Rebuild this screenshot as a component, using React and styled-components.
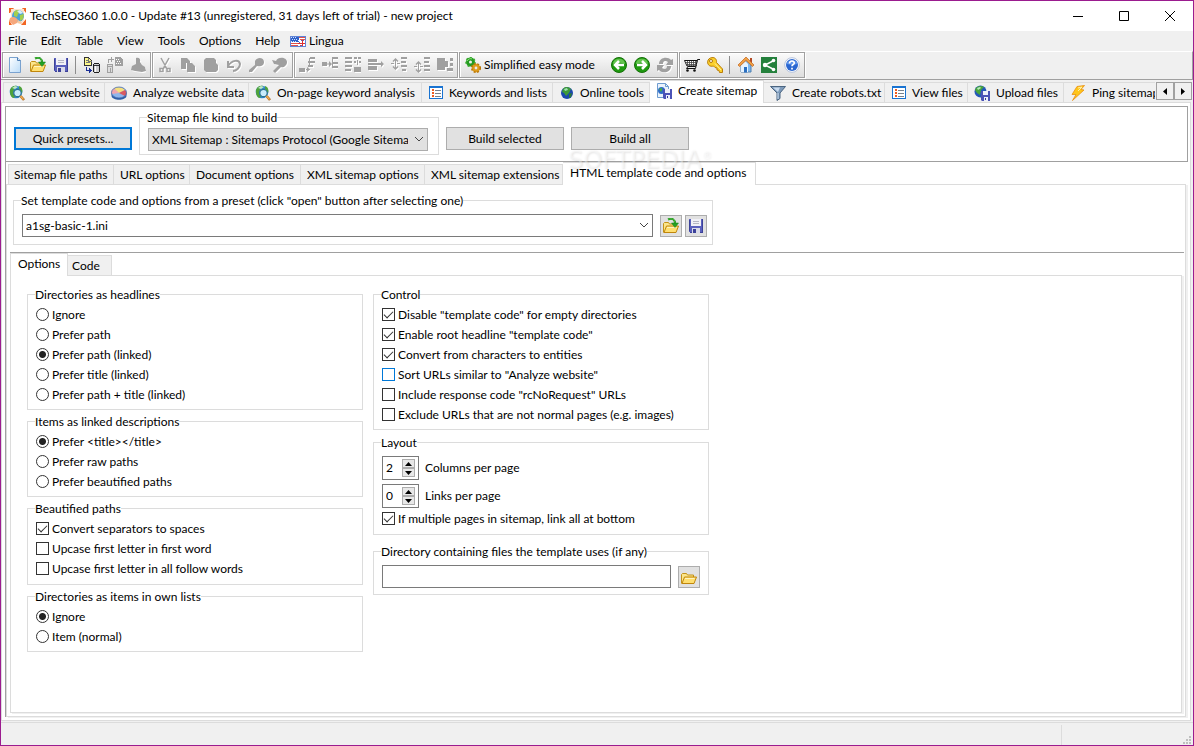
import React, { useState } from 'react'
import styled, { createGlobalStyle, css } from 'styled-components'

const line = '#dcdcdc'
const dark = '#a0a0a0'
const face = '#f0f0f0'

const GlobalStyle = createGlobalStyle`
  *, *::before, *::after {
    box-sizing: border-box;
  }

  body {
    margin: 0;
    background: ${face};
    color: #000;
    font-family: Lato, 'Open Sans', sans-serif;
    font-size: 12px;
    line-height: 16px;
  }

  button, input, select {
    font: inherit;
    color: inherit;
  }
`

const Window = styled.div`
  display: flex;
  flex-direction: column;
  min-height: 100vh;
  border: 1px solid #9b1c8f;
  background: ${face};
`

const TitleBar = styled.header`
  display: flex;
  align-items: center;
  height: 30px;
  padding-left: 8px;
  background: #fff;
`

const Title = styled.h1`
  flex: 1;
  margin: 0 0 0 4px;
  font-size: 12px;
  font-weight: 400;
  white-space: nowrap;
`

const WindowButton = styled.button`
  display: flex;
  align-items: center;
  justify-content: center;
  width: 46px;
  height: 30px;
  padding: 0;
  border: 0;
  background: none;
`

const MenuBar = styled.nav`
  display: flex;
  align-items: center;
  gap: 14px;
  height: 20px;
  padding-left: 7px;
`

const MenuItem = styled.button`
  display: flex;
  align-items: center;
  gap: 3px;
  padding: 0;
  border: 0;
  background: none;
  white-space: nowrap;

  &:last-child {
    margin-left: -4px;
  }
`

const Toolbar = styled.div`
  display: flex;
  gap: 1px;
  height: 29px;
  padding-left: 1px;
  border-top: 1px solid #fff;
  border-right: 1px solid ${dark};
  border-bottom: 1px solid ${dark};
`

const ToolGroup = styled.div`
  display: flex;
  align-items: center;
  height: 26px;
  padding-right: 1px;
  border: 1px solid ${dark};
  box-shadow: inset 1px 1px 0 #fff, 1px 1px 0 #fff;
  background: linear-gradient(#fbfbfb, #dedede);
`

const ToolButton = styled.button`
  display: flex;
  align-items: center;
  justify-content: center;
  gap: 3px;
  width: 23px;
  height: 24px;
  padding: 0;
  border: 0;
  background: none;
  white-space: nowrap;

  ${({ $wide }) => $wide && css`
    justify-content: flex-start;
    width: 147px;
    padding-left: 5px;
  `}
`

const ToolSeparator = styled.div`
  width: 1px;
  height: 18px;
  margin: 0 4px 0 3px;
  background: #8c8c8c;
`

const TabRow = styled.div`
  display: flex;
  height: 22px;
  min-width: 0;
  padding-left: ${({ $indent }) => $indent || 0}px;
`

const TabClip = styled.div`
  display: flex;
  flex: 1;
  min-width: 0;
  margin-right: 1px;
  margin-bottom: -1px;
  overflow: hidden;
`

const Tab = styled.button`
  display: flex;
  flex: 0 0 ${({ $width }) => $width}px;
  align-items: center;
  gap: 6px;
  height: 20px;
  margin-top: 2px;
  padding: 0 0 0 ${({ $pad }) => $pad || 6}px;
  border: 1px solid ${line};
  border-width: 1px 1px 0 0;
  background: ${face};
  white-space: nowrap;

  &:first-child {
    border-left-width: 1px;
  }

  ${({ $active }) => $active && css`
    position: relative;
    height: 23px;
    margin-top: 0;
    padding-bottom: 3px;
    background: #fff;
  `}
`

const ScrollButton = styled.button`
  display: flex;
  align-items: center;
  justify-content: center;
  width: 18px;
  height: 18px;
  margin-top: 2px;
  padding: 0;
  border: 1px solid ${dark};
  background: ${face};

  & + & {
    margin-right: 1px;
  }
`

const MainPane = styled.main`
  display: flex;
  flex: 1;
  flex-direction: column;
  margin: 0 2px 1px 0;
  padding: 3px 2px 3px 3px;
  border: 1px solid ${line};
  background: #fff;
`

const SitemapPanel = styled.section`
  display: flex;
  flex: 1;
  flex-direction: column;
  border-top: 1px solid ${dark};
  border-left: 1px solid ${dark};
`

const BuildBar = styled.div`
  display: flex;
  align-items: flex-start;
  gap: 7px;
  height: 55px;
  padding: 3px 8px 0;
  border-right: 1px solid ${dark};
  border-bottom: 1px solid ${dark};
`

const PushButton = styled.button`
  width: 118px;
  height: 23px;
  margin-top: 17px;
  padding: 0;
  border: ${({ $focused }) => ($focused ? '2px solid #0078d7' : '1px solid #adadad')};
  background: #e1e1e1;
  white-space: nowrap;
`

const SectionTabs = styled.div`
  position: relative;
`

const Watermark = styled.span`
  position: absolute;
  top: -16px;
  left: 562px;
  z-index: 1;
  color: rgba(255, 255, 255, 0.4);
  font-family: 'DejaVu Sans', sans-serif;
  font-size: 24px;
  line-height: 28px;
  text-shadow: 1px 1px 2px rgba(0, 0, 0, 0.1);
  pointer-events: none;

  sup {
    font-size: 10px;
    line-height: 0;
  }
`

const SectionPane = styled.div`
  display: flex;
  flex: 1;
  flex-direction: column;
  margin-right: 2px;
  padding: 8px 1px 3px 3px;
  border: 1px solid ${line};
  box-shadow: 2px 1px 0 ${face};
`

const Group = styled.fieldset`
  width: ${({ $width }) => $width}px;
  min-width: 0;
  margin: 0;
  padding: 3px 8px ${({ $bottom }) => $bottom || 4}px;
  border: 1px solid ${line};
`

const Legend = styled.legend`
  height: 15px;
  margin-left: -1px;
  padding: 0;
  white-space: nowrap;
`

const BuildGroup = styled(Group)`
  padding-right: 6px;
`

const PresetGroup = styled(Group)`
  margin-left: 3px;
  padding-top: 6px;
  padding-right: 5px;
`

const DirectoryGroup = styled(Group)`
  margin-top: 4px;
  padding-top: 6px;
`

const FieldRow = styled.div`
  display: flex;
  align-items: center;
  gap: 3px;
`

const SelectWrap = styled.div`
  position: relative;
  flex: 1;
  margin-right: 4px;

  svg {
    position: absolute;
    top: 8px;
    right: 4px;
    pointer-events: none;
  }
`

const Select = styled.select`
  display: block;
  width: 100%;
  height: 23px;
  padding: 0 19px 0 3px;
  border: 1px solid ${({ $editable }) => ($editable ? '#7a7a7a' : '#adadad')};
  border-radius: 0;
  outline: 0;
  appearance: none;
  background: ${({ $editable }) => ($editable ? '#fff' : '#e1e1e1')};
`

const IconButton = styled.button`
  display: flex;
  align-items: center;
  justify-content: center;
  width: 22px;
  height: 22px;
  padding: 0;
  border: 1px solid #adadad;
  background: #e1e1e1;
`

const OptionsPanel = styled.div`
  display: flex;
  flex: 1;
  flex-direction: column;
  margin-top: 7px;
  border-top: 1px solid ${dark};
`

const OptionsPane = styled.div`
  display: flex;
  flex: 1;
  align-items: flex-start;
  gap: 10px;
  margin-right: 2px;
  padding: 11px 16px;
  border: 1px solid ${line};
  box-shadow: 2px 1px 0 ${face};
`

const Column = styled.div`
  display: flex;
  flex-direction: column;
  gap: ${({ $gap }) => $gap}px;
`

const Choice = styled.label`
  display: flex;
  align-items: center;
  gap: 3px;
  height: 20px;
  white-space: nowrap;
`

const Radio = styled.input`
  width: 13px;
  height: 13px;
  margin: 0 0 1px;
  border: 1px solid #333;
  border-radius: 50%;
  appearance: none;
  background: #fff;

  &:checked {
    background: radial-gradient(circle, #222 3px, #fff 4px);
  }
`

const Check = styled.input`
  width: 13px;
  height: 13px;
  margin: 0 0 1px;
  border: 1px solid ${({ $hot }) => ($hot ? '#0078d7' : '#333')};
  border-radius: 0;
  appearance: none;
  background: #fff;

  &:checked::before {
    content: '';
    display: block;
    width: 9px;
    height: 5px;
    margin: 2px 0 0 1px;
    border: solid #333;
    border-width: 0 0 1px 1px;
    transform: rotate(-45deg);
  }
`

const SpinRow = styled.div`
  display: flex;
  align-items: center;
  gap: 6px;
  height: 24px;
  margin: 3px 0 4px;

  & + & {
    margin: 0 0 1px;
  }
`

const SpinBox = styled.div`
  display: flex;
  align-items: center;
  width: 37px;
  height: 24px;
  padding-right: 3px;
  border: 1px solid #7a7a7a;
  background: #fff;
`

const SpinInput = styled.input`
  flex: 1;
  min-width: 0;
  height: 20px;
  padding: 0 0 2px 3px;
  border: 0;
  outline: 0;
  background: none;
`

const SpinButtons = styled.div`
  display: flex;
  flex-direction: column;
`

const SpinButton = styled.button`
  display: flex;
  align-items: center;
  justify-content: center;
  width: 13px;
  height: 9px;
  padding: 0;
  border: 1px solid #adadad;
  background: #e8e8e8;
`

const PathInput = styled.input`
  flex: 1;
  min-width: 0;
  height: 23px;
  margin-right: 4px;
  padding: 0 3px;
  border: 1px solid #7a7a7a;
  outline: 0;
`

const StatusBar = styled.footer`
  display: flex;
  align-items: flex-end;
  justify-content: flex-end;
  height: 23px;
  border-top: 1px solid ${line};
`

const StatusCell = styled.div`
  display: flex;
  align-items: flex-end;
  justify-content: flex-end;
  width: 132px;
  height: 20px;
  padding: 0 2px 1px;
  border-left: 1px solid ${line};
`

/* icons */

const Svg = ({ w = 16, h = 16, children, ...rest }) => (
  <svg width={w} height={h} viewBox={`0 0 ${w} ${h}`} fill="none" aria-hidden="true" {...rest}>
    {children}
  </svg>
)

const AppIcon = () => (
  <Svg w={17} h={17}>
    <path d="M0 0h5L1 5H0zM17 0v5l-4-5zM0 17v-5l3 5zM17 17h-5l5-6z" fill="#f26522" />
    <path d="M2 1h13v13H2z" fill="#fbe3d0" />
    <circle cx="9" cy="8" r="6" fill="#4aa3d8" />
    <path d="M5 4c3-3 5-2 6 0l-2 2-1 3-3-1zM11 7l4-1-1 5-3 2z" fill="#a5cf4c" />
    <path d="M8 3l3-1 3 3-3 1z" fill="#d7eefa" />
    <path d="M1 10c3-2 6-1 8 2l-1 3-4 2-4-4z" fill="#f5a77d" />
    <path d="M9 12l5 3-2 1-4-1z" fill="#f7c9a3" />
  </Svg>
)

const FlagIcon = () => (
  <Svg h={11} shapeRendering="crispEdges">
    <path d="M0 0h16v11H0z" fill="#fff" />
    <path d="M0 0h9v6H0z" fill="#2f62c9" />
    <path d="M9 1.500h7M9 3.500h7M0 7.500h9M0 9.500h8" stroke="#e0524b" />
    <path d="M1 1.500h1M3 1.500h1M5 1.500h1M2 3.500h1M4 3.500h1M6 3.500h1M1 5.500h1M3 5.500h1M5 5.500h1" stroke="#cfe0ff" />
    <path d="M10 4h6v7H8z" fill="#4c6cc5" />
    <path d="M8 11l8-7M9 4l7 7" stroke="#fff" strokeWidth="2" />
    <path d="M12.500 4v7M8 7.500h8M9 11l2-2" stroke="#df2f2f" />
    <path d="M.5.5h15v10H.5z" stroke="#5f83d6" />
  </Svg>
)

const NewIcon = () => (
  <Svg>
    <path d="M2.500.5h8l3 3v12h-11z" fill="url(#page)" stroke="#7aa2cf" />
    <path d="M10.500.5v3h3" fill="#d9eafb" stroke="#4f7fb5" />
    <defs>
      <linearGradient id="page" x1="0" y1="0" x2="1" y2="1">
        <stop stopColor="#fff" />
        <stop offset="1" stopColor="#b9dbf8" />
      </linearGradient>
    </defs>
  </Svg>
)

const OpenIcon = ({ arrow = true }) => (
  <Svg>
    <path d="M.5 14.500v-9l1-1h4l1 1.500h6v3" fill="#fbe58b" stroke="#c49217" />
    <path d="M1 14.500l2.500-6.500h12l-2.500 6.500z" fill="#ffdf70" stroke="#c0860c" />
    <path d="M4 9.500h9.500" stroke="#fff4bf" />
    {arrow && (
      <>
        <path d="M5 1.500c4-2 7 0 7 4" stroke="#178a1a" strokeWidth="2" />
        <path d="M5 1.500c4-2 7 0 7 4" stroke="#5fce48" strokeWidth=".8" />
        <path d="M8.500 5h7L12 9.500z" fill="#24a325" stroke="#137a17" strokeWidth=".5" />
      </>
    )}
  </Svg>
)

const SaveIcon = () => (
  <Svg shapeRendering="crispEdges">
    <path d="M1 1h14v14H2l-1-1z" fill="#5a60bd" />
    <path d="M1 2h1v11H1zM14 1h1v14h-1zM2 14h13v1H2z" fill="#3c4199" />
    <path d="M3 1h10v7H3z" fill="#f1f1f6" />
    <path d="M5 3.500h6M5 5.500h6" stroke="#b5b6c4" />
    <path d="M4 10h8v5H4z" fill="#d9dae8" />
    <path d="M5 11h3v4H5z" fill="#3c4199" />
  </Svg>
)

const DataIcon = ({ muted }) => (
  <Svg w={17} shapeRendering="crispEdges">
    {muted ? (
      <>
        <path d="M9 0h5l3 3v6H9z" fill="#a0a0a0" />
        <path d="M10 2h1v1h-1zM12 2h1v1h-1zM11 4h1v1h-1zM13 4h1v1h-1zM10 6h1v1h-1zM12 6h1v1h-1zM14 6h1v1h-1z" fill="#fff" />
        <path d="M1.500 7.500h5v8h-5z" fill="#ddd" stroke="#a0a0a0" />
        <path d="M2 9.500h4M4.500 11v4M2 2.500h6M5.500 0v5M2.500 3v3" stroke="#a0a0a0" />
      </>
    ) : (
      <>
        <path d="M1.500.5h4l3 3v5h-7z" fill="#fdf98a" stroke="#333" />
        <path d="M3 3.500h2M3 5.500h4M5.500 1v3h3" stroke="#777" />
        <path d="M11.500 6.500h4l1 1v7l-1 1h-4l-1-1v-7z" fill="#d0d0d0" stroke="#222" />
        <path d="M12.500 8v7" stroke="#fff" />
        <path d="M11 8.500h5" stroke="#333" />
        <path d="M3.500 10v3h5M6.500 11v5M7.500 12v3" stroke="#1b2f95" />
      </>
    )}
  </Svg>
)

// disabled toolbar glyphs are a grey shape over a white one moved by 1px
const mutedPaths = {
  brush: { d: 'M6 1c3-1 5 1 4 4l2 3 3 2 1 4-4 1-7-1-4-1 1-4 4-2z' },
  cut: { d: 'M4 1l5 9M12 1L7 10M3 11.500h3v3H3zM10 11.500h3v3h-3zM6 12l2-3 2 3', stroke: 1.5 },
  copy: { d: 'M1 1h6l3 3v2H6v6H1zM7 6h5l3 3v6H7z' },
  paste: { d: 'M1 3l2-2h8l2 2v3l2 2v5l-2 2H3l-2-2z' },
  undo: { d: 'M2 4v6h6M2 9c4-6 11-7 12-2 0 4-4 7-7 7', stroke: 2 },
  find: { d: 'M6 4c3-5 9-3 9 1s-4 5-7 4l-5 6H0v-2l6-5z' },
  replace: { d: 'M0 3l4 1C6-1 15 0 15 5c0 4-4 6-6 5l-6 6-2-2 6-6-5-1z' },
  row1: { d: 'M0 11h6v4H0zM11 0h5v2h-5zM9 4h7v2H9zM9 8h5v2H9zM10 1h1v9h-1zM7 12h4v1H7zM8 10l3 2.500-3 2.500z' },
  row2: { d: 'M0 5h5v4H0zM5 6.500h3v1H5zM7 4l3 3-3 3zM11 0h5v2h-5zM11 5h5v2h-5zM11 9h5v2h-5zM10 0h1v11h-1z' },
  row3: { d: 'M0 0h7v2H0zM0 4h7v2H0zM0 8h7v2H0zM9 0h3v2H9zM13 0h3v2h-3zM9 4h2v2H9zM12 3h1v5h-1zM14 4h2v2h-2zM9 10h7v5H9zM0 12h6v2H0z' },
  row4: { d: 'M0 2h9v3H0zM0 6h13V4l3 3-3 3V8H0zM0 9h9v4H0z' },
  row5: { d: 'M4.500 1l3 3-1 1-1.500-1.500v7L6.500 9l1 1-3 3-3-3 1-1L4 10.500v-7L2.500 5l-1-1zM0 6h3v1H0zM6 6h3v1H6zM10 0h6v2h-6zM10 4h5v2h-5zM10 8h6v2h-6zM11 12h4v2h-4z' },
  row6: { d: 'M4.500 4l3 3-1 1-1.500-1.500v7L6.500 12l1 1-3 3-3-3 1-1L4 13.500v-7L2.500 8l-1-1zM0 9h3v1H0zM6 9h3v1H6zM10 0h6v2h-6zM10 4h5v2h-5zM10 8h6v2h-6zM10 12h6v2h-6z' },
  row7: { d: 'M0 1h8v3h3v6H8v3H0zM10 11h6v3h-6zM13 1h3v3h-3zM13 6h3v3h-3z' },
  refresh: { d: 'M2 7c0-7 9-8 12-4l2-1v6h-7l2-3c-3-2-5-1-5 2zM14 9c0 7-9 8-12 4l-2 1V8h7l-2 3c3 2 5 1 5-2z' },
}

const MutedIcon = ({ name }) => {
  const { d, stroke } = mutedPaths[name]
  return (
    <Svg>
      <path d={d} transform="translate(1 1)" fill={stroke ? 'none' : '#fff'} stroke={stroke ? '#fff' : 'none'} strokeWidth={stroke} />
      <path d={d} fill={stroke ? 'none' : '#a0a0a0'} stroke={stroke ? '#a0a0a0' : 'none'} strokeWidth={stroke} />
    </Svg>
  )
}

const GearsIcon = () => (
  <Svg>
    <circle cx="5.500" cy="5" r="3" stroke="#259b22" strokeWidth="3" />
    <circle cx="5.500" cy="5" r="4.500" stroke="#3aab30" strokeWidth="1.500" strokeDasharray="2 2" />
    <path d="M2 4c1-2 4-3 5-2" stroke="#8ce07a" />
    <circle cx="11" cy="11" r="2.800" stroke="#dc9a1c" strokeWidth="2.800" />
    <circle cx="11" cy="11" r="4.300" stroke="#b97706" strokeWidth="1.500" strokeDasharray="2 1.500" />
  </Svg>
)

const ArrowIcon = ({ back }) => (
  <Svg>
    <circle cx="8" cy="8" r="7.500" fill="#1f9a10" stroke="#157009" />
    <path d="M2 7c0-7 12-7 12 0-4-2-8-2-12 0z" fill="#64c44f" />
    <path d={back ? 'M13 8H4M8 4L4 8l4 4' : 'M3 8h9M8 4l4 4-4 4'} stroke="#fff" strokeWidth="2.500" />
  </Svg>
)

const CartIcon = () => (
  <Svg>
    <path d="M16 2.500h-2.500l-2 9H2.500L4 9.500h7.500" stroke="#111" />
    <path d="M.5 3.500h12.500l-1 5.500H3z" fill="#fff" stroke="#111" />
    <path d="M1 5.500h12M2 7.500h11M3.500 4v5M5.500 4v5M7.500 4v5M9.500 4v5M11.500 4v5" stroke="#444" strokeWidth=".8" />
    <circle cx="3.500" cy="13.500" r="1.300" fill="#111" />
    <circle cx="10.500" cy="13.500" r="1.300" fill="#111" />
  </Svg>
)

const KeyIcon = () => (
  <Svg>
    <path d="M5 .6c3-.5 5 2 4.500 4.900L15.500 12v3.500h-3l-.5-2-2-.5v-2l-2-.5L6.500 9C3 10 .5 8 .6 4.800.8 2.500 2.500.8 5 .6z" fill="#fbd02c" stroke="#bb7f0a" />
    <circle cx="4" cy="4" r="1.500" fill="#fff" stroke="#b27708" />
    <path d="M8 6.500l6 6.500" stroke="#fff1a3" />
  </Svg>
)

const HomeIcon = () => (
  <Svg>
    <path d="M3 8l5-5 5 5v7H3z" fill="#7db8ee" stroke="#4f7fae" />
    <path d="M3 8l4-4 3 3v8H3z" fill="#e6f3ff" />
    <path d="M12 1h2v5h-2z" fill="#b34a25" />
    <path d="M8 0l8 8-1.500 1.500L8 3.500 1.500 9.500 0 8z" fill="#f0a046" stroke="#c1641b" strokeWidth=".7" />
    <path d="M6 10h3v5.500H6z" fill="#2b6fc0" />
  </Svg>
)

const ShareIcon = () => (
  <Svg>
    <path d="M0 0h16v16H0z" fill="#24803c" />
    <path d="M13 3.500L4 8l9 4.500" stroke="#fff" strokeWidth="1.500" />
    <circle cx="12.500" cy="3.500" r="1.800" fill="#fff" />
    <circle cx="4" cy="8" r="2.200" fill="#fff" />
    <circle cx="12.500" cy="12.500" r="1.800" fill="#fff" />
  </Svg>
)

const HelpIcon = () => (
  <Svg>
    <circle cx="8" cy="8" r="7.300" fill="#fff" stroke="#b4c2dd" />
    <circle cx="8" cy="8" r="6" fill="#2b67d0" />
    <path d="M2.500 7c1-5 10-5 11 0-4 1-7 1-11 0z" fill="#5d94ec" />
    <path d="M5.500 6.500c0-3.500 5-3 4.800-.3-.3 1.500-2.300 1.300-2.300 3M8 10.800v1.700" stroke="#fff" strokeWidth="1.700" />
  </Svg>
)

const ScanIcon = () => (
  <Svg>
    <circle cx="7" cy="7" r="6.300" fill="#2f86cc" />
    <path d="M1 5c1-4 5-5 7-4L5 4 4 8l2 4-2 1C1 11 1 8 1 5zM10 1c3 1 4 4 3 7l-3-3z" fill="#4fa33a" />
    <path d="M3 3l3-2 3 1-3 2z" fill="#bfe7c8" />
    <circle cx="8.500" cy="8" r="3.700" fill="#c9ecfb" stroke="#2b7292" strokeWidth="1.200" />
    <path d="M11.500 11l3.500 4" stroke="#a8641f" strokeWidth="2.600" />
    <path d="M11.500 11l3 3.500" stroke="#f6b04e" strokeWidth="1.200" />
  </Svg>
)

const PieIcon = () => (
  <Svg>
    <path d="M.5 8v3c1 5 14 5 15 0V8z" fill="#2f5fa8" />
    <ellipse cx="8" cy="7.500" rx="7.500" ry="5.500" fill="#8fb6ec" />
    <path d="M8 8L3 3.500c3-2 8-2 11 1.500z" fill="#f6df7b" />
    <path d="M8 8l6-3c2 2 2 4 0 6z" fill="#d95a62" />
    <path d="M8 8L3 3.500C0 5.500 0 8 1 9z" fill="#f0a5ad" />
    <ellipse cx="8" cy="7.500" rx="7.500" ry="5.500" stroke="#3a5fa5" strokeWidth=".7" />
  </Svg>
)

const ListIcon = () => (
  <Svg w={14} h={13} shapeRendering="crispEdges">
    <path d="M.5.5h13v12H.5z" fill="#fff" stroke="#1973d1" />
    <path d="M0 1h14" stroke="#1973d1" strokeWidth="2" />
    <path d="M3 4h2M3 7h2M3 10h2" stroke="#ee5b20" strokeWidth="2" />
    <path d="M6 4.500h6M6 7.500h6M6 10.500h6" stroke="#77818c" />
  </Svg>
)

const GlobeIcon = () => (
  <Svg w={14}>
    <circle cx="7" cy="8" r="6" fill="#1c48ae" />
    <path d="M3 4c2-3 6-2 8 0l-2 4-3 3-2-3-2-1z" fill="#3f9a38" />
    <path d="M4 4l3-1 1 2-3 1z" fill="#9de0b3" />
    <path d="M9 9l3-1-1 4-2 1z" fill="#2d7c35" />
  </Svg>
)

const SmallDisk = () => (
  <>
    <path d="M7 6h9v10H8l-1-1z" fill="#4b53b6" />
    <path d="M9 6h5v4H9zM10 12h4v4h-4z" fill="#edf0fa" />
    <path d="M11 13h1v2h-1z" fill="#343a99" />
  </>
)

const SitemapIcon = () => (
  <Svg>
    <path d="M1.500.5h8l3 3v11h-11z" fill="#eaf3fc" stroke="#6f9dd0" />
    <path d="M9.500.5v3h3" stroke="#6f9dd0" />
    <circle cx="5.500" cy="7.500" r="3.500" fill="#2d6cc7" />
    <path d="M3 6l3-1v2l-1 2z" fill="#4caf3c" />
    <SmallDisk />
  </Svg>
)

const FunnelIcon = () => (
  <Svg>
    <path d="M.5 1.500h15L10 8v5.500l-3 2V8z" fill="#7d9aba" stroke="#4b6580" />
    <path d="M3 2.500h7L8 7z" fill="#c9dcf0" />
    <path d="M8 8v6" stroke="#d3e2f2" />
  </Svg>
)

const UploadIcon = () => (
  <Svg>
    <circle cx="6.500" cy="6.500" r="6" fill="#2459b8" />
    <path d="M1 5c1-4 6-5 9-3L7 5l-1 5-3-2z" fill="#4aa53a" />
    <path d="M3 3l3-1 1 1-3 2z" fill="#b8ecc0" />
    <SmallDisk />
  </Svg>
)

const BoltIcon = () => (
  <Svg>
    <path d="M7 1.500L14.500.5 11 4.500l3 .5L2.500 15.500 6 9.500 2 9.500z" fill="#ffc61a" stroke="#e88e12" strokeWidth=".8" />
    <path d="M8 3l4-1-4 4" stroke="#fff2a6" />
  </Svg>
)

const Chevron = () => (
  <Svg w={10} h={7}>
    <path d="M1 1l4 4 4-4" stroke="#444" />
  </Svg>
)

/* parts */

const toolGroups = [
  [
    ['New', <NewIcon />], ['Open', <OpenIcon />], ['Save', <SaveIcon />], null,
    ['Import', <DataIcon />], ['Export', <DataIcon muted />], ['Clear', <MutedIcon name="brush" />],
  ],
  ['cut', 'copy', 'paste', 'undo', 'find', 'replace'].map((name) => [name, <MutedIcon name={name} />]),
  ['row1', 'row2', 'row3', 'row4', 'row5', 'row6', 'row7'].map((name) => [name, <MutedIcon name={name} />]),
  [
    ['Simplified easy mode', <GearsIcon />, true], ['Back', <ArrowIcon back />],
    ['Forward', <ArrowIcon />], ['Refresh', <MutedIcon name="refresh" />],
  ],
  [
    ['Buy', <CartIcon />], ['Register', <KeyIcon />], null,
    ['Home', <HomeIcon />], ['Share', <ShareIcon />], ['Help', <HelpIcon />],
  ],
]

const mainTabs = [
  { label: 'Scan website', icon: <ScanIcon />, width: 102, pad: 5 },
  { label: 'Analyze website data', icon: <PieIcon />, width: 144 },
  { label: 'On-page keyword analysis', icon: <ScanIcon />, width: 173 },
  { label: 'Keywords and lists', icon: <ListIcon />, width: 131, pad: 7 },
  { label: 'Online tools', icon: <GlobeIcon />, width: 97, pad: 7 },
  { label: 'Create sitemap', icon: <SitemapIcon />, width: 114, active: true },
  { label: 'Create robots.txt', icon: <FunnelIcon />, width: 121 },
  { label: 'View files', icon: <ListIcon />, width: 83, pad: 7 },
  { label: 'Upload files', icon: <UploadIcon />, width: 96 },
  { label: 'Ping sitemap', icon: <BoltIcon />, width: 120 },
]

const sectionTabs = [
  { label: 'Sitemap file paths', width: 106, pad: 5 },
  { label: 'URL options', width: 76 },
  { label: 'Document options', width: 111 },
  { label: 'XML sitemap options', width: 124 },
  { label: 'XML sitemap extensions', width: 138 },
  { label: 'HTML template code and options', width: 193, active: true, pad: 7 },
]

const optionTabs = [
  { label: 'Options', width: 58, active: true, pad: 7 },
  { label: 'Code', width: 44, pad: 4 },
]

const Tabs = ({ items }) => items.map(({ label, icon, width, pad, active }) => (
  <Tab key={label} type="button" role="tab" aria-selected={!!active} $width={width} $pad={pad} $active={active}>
    {icon}
    {label}
  </Tab>
))

const RadioGroup = ({ title, name, options, selected }) => {
  const [value, setValue] = useState(selected)
  return (
    <Group $width={336}>
      <Legend>{title}</Legend>
      {options.map((option) => (
        <Choice key={option}>
          <Radio type="radio" name={name} checked={value === option} onChange={() => setValue(option)} />
          {option}
        </Choice>
      ))}
    </Group>
  )
}

const CheckRow = ({ label, checked, hot }) => (
  <Choice>
    <Check type="checkbox" defaultChecked={checked} $hot={hot} />
    {label}
  </Choice>
)

const Spinner = ({ id, label, initial }) => {
  const [value, setValue] = useState(initial)
  return (
    <SpinRow>
      <SpinBox>
        <SpinInput id={id} inputMode="numeric" value={value} onChange={(e) => setValue(Number(e.target.value) || 0)} />
        <SpinButtons>
          <SpinButton type="button" aria-label={`Increase ${label}`} onClick={() => setValue(value + 1)}>
            <Svg w={7} h={4}><path d="M0 4l3.500-4L7 4z" fill="#000" /></Svg>
          </SpinButton>
          <SpinButton type="button" aria-label={`Decrease ${label}`} onClick={() => setValue(Math.max(0, value - 1))}>
            <Svg w={7} h={4}><path d="M0 0l3.500 4L7 0z" fill="#000" /></Svg>
          </SpinButton>
        </SpinButtons>
      </SpinBox>
      <label htmlFor={id}>{label}</label>
    </SpinRow>
  )
}

const App = () => {
  return (
    <>
      <GlobalStyle />
      <Window>
        <TitleBar>
          <AppIcon />
          <Title>TechSEO360 1.0.0 - Update #13 (unregistered, 31 days left of trial) - new project</Title>
          <WindowButton type="button" aria-label="Minimize">
            <Svg w={10} h={11}><path d="M0 5.500h10" stroke="#000" /></Svg>
          </WindowButton>
          <WindowButton type="button" aria-label="Maximize">
            <Svg w={10} h={10}><path d="M.5.5h9v9h-9z" stroke="#000" /></Svg>
          </WindowButton>
          <WindowButton type="button" aria-label="Close">
            <Svg w={10} h={10}><path d="M0 0l10 10M10 0L0 10" stroke="#000" /></Svg>
          </WindowButton>
        </TitleBar>

        <MenuBar>
          {['File', 'Edit', 'Table', 'View', 'Tools', 'Options', 'Help'].map((item) => (
            <MenuItem key={item} type="button">{item}</MenuItem>
          ))}
          <MenuItem type="button"><FlagIcon />Lingua</MenuItem>
        </MenuBar>

        <Toolbar>
          {toolGroups.map((tools, group) => (
            <ToolGroup key={group}>
              {tools.map((tool, index) => (tool ? (
                <ToolButton key={tool[0]} type="button" aria-label={tool[0]} $wide={tool[2]}>
                  {tool[1]}
                  {tool[2] && tool[0]}
                </ToolButton>
              ) : <ToolSeparator key={index} />))}
            </ToolGroup>
          ))}
        </Toolbar>

        <TabRow $indent={2}>
          <TabClip role="tablist">
            <Tabs items={mainTabs} />
          </TabClip>
          <ScrollButton type="button" aria-label="Scroll tabs left">
            <Svg w={4} h={7}><path d="M4 0v7L0 3.500z" fill="#000" /></Svg>
          </ScrollButton>
          <ScrollButton type="button" aria-label="Scroll tabs right">
            <Svg w={4} h={7}><path d="M0 0v7l4-3.500z" fill="#000" /></Svg>
          </ScrollButton>
        </TabRow>

        <MainPane>
          <SitemapPanel>
            <BuildBar>
              <PushButton type="button" $focused>Quick presets...</PushButton>
              <BuildGroup $width={300} $bottom={3}>
                <Legend>Sitemap file kind to build</Legend>
                <FieldRow>
                  <SelectWrap>
                    <Select aria-label="Sitemap file kind to build">
                      <option>XML Sitemap : Sitemaps Protocol (Google Sitemap)</option>
                    </Select>
                    <Chevron />
                  </SelectWrap>
                </FieldRow>
              </BuildGroup>
              <PushButton type="button">Build selected</PushButton>
              <PushButton type="button">Build all</PushButton>
            </BuildBar>

            <SectionTabs>
              <TabRow $indent={2} role="tablist">
                <Tabs items={sectionTabs} />
              </TabRow>
              <Watermark aria-hidden="true">SOFTPEDIA<sup>®</sup></Watermark>
            </SectionTabs>

            <SectionPane>
              <PresetGroup $width={700} $bottom={7}>
                <Legend>Set template code and options from a preset (click "open" button after selecting one)</Legend>
                <FieldRow>
                  <SelectWrap>
                    <Select $editable aria-label="Template preset">
                      <option>a1sg-basic-1.ini</option>
                    </Select>
                    <Chevron />
                  </SelectWrap>
                  <IconButton type="button" aria-label="Open preset"><OpenIcon /></IconButton>
                  <IconButton type="button" aria-label="Save preset"><SaveIcon /></IconButton>
                </FieldRow>
              </PresetGroup>

              <OptionsPanel>
                <TabRow role="tablist">
                  <Tabs items={optionTabs} />
                </TabRow>
                <OptionsPane>
                  <Column $gap={4}>
                    <RadioGroup
                      title="Directories as headlines"
                      name="headlines"
                      options={['Ignore', 'Prefer path', 'Prefer path (linked)', 'Prefer title (linked)', 'Prefer path + title (linked)']}
                      selected="Prefer path (linked)"
                    />
                    <RadioGroup
                      title="Items as linked descriptions"
                      name="descriptions"
                      options={['Prefer <title></title>', 'Prefer raw paths', 'Prefer beautified paths']}
                      selected="Prefer <title></title>"
                    />
                    <Group $width={336} $bottom={5}>
                      <Legend>Beautified paths</Legend>
                      <CheckRow label="Convert separators to spaces" checked />
                      <CheckRow label="Upcase first letter in first word" />
                      <CheckRow label="Upcase first letter in all follow words" />
                    </Group>
                    <RadioGroup
                      title="Directories as items in own lists"
                      name="lists"
                      options={['Ignore', 'Item (normal)']}
                      selected="Ignore"
                    />
                  </Column>

                  <Column $gap={5}>
                    <Group $width={336}>
                      <Legend>Control</Legend>
                      <CheckRow label={'Disable "template code" for empty directories'} checked />
                      <CheckRow label={'Enable root headline "template code"'} checked />
                      <CheckRow label="Convert from characters to entities" checked />
                      <CheckRow label={'Sort URLs similar to "Analyze website"'} hot />
                      <CheckRow label={'Include response code "rcNoRequest" URLs'} />
                      <CheckRow label="Exclude URLs that are not normal pages (e.g. images)" />
                    </Group>
                    <Group $width={336} $bottom={5}>
                      <Legend>Layout</Legend>
                      <Spinner id="columns" label="Columns per page" initial={2} />
                      <Spinner id="links" label="Links per page" initial={0} />
                      <CheckRow label="If multiple pages in sitemap, link all at bottom" checked />
                    </Group>
                    <DirectoryGroup $width={336} $bottom={6}>
                      <Legend>Directory containing files the template uses (if any)</Legend>
                      <FieldRow>
                        <PathInput type="text" aria-label="Directory containing files the template uses" />
                        <IconButton type="button" aria-label="Browse"><OpenIcon arrow={false} /></IconButton>
                      </FieldRow>
                    </DirectoryGroup>
                  </Column>
                </OptionsPane>
              </OptionsPanel>
            </SectionPane>
          </SitemapPanel>
        </MainPane>

        <StatusBar>
          <StatusCell>
            <Svg w={8} h={8} shapeRendering="crispEdges">
              <path d="M6 0h2v2H6zM3 3h2v2H3zM6 3h2v2H6zM0 6h2v2H0zM3 6h2v2H3zM6 6h2v2H6z" fill="#bfbfbf" />
            </Svg>
          </StatusCell>
        </StatusBar>
      </Window>
    </>
  )
}

export default App
